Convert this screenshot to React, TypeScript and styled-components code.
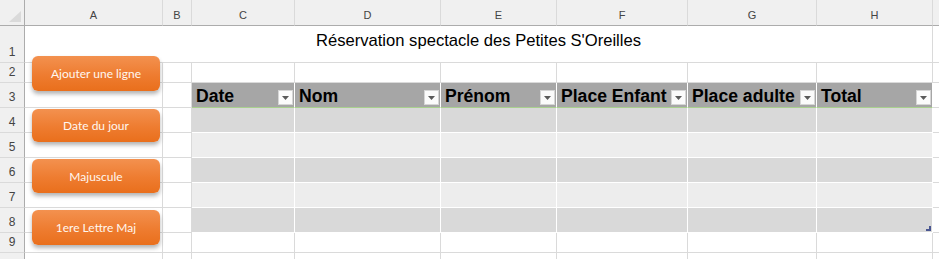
import React from 'react';
import styled, { createGlobalStyle, css } from 'styled-components';

const GlobalStyle = createGlobalStyle`
  html, body {
    margin: 0;
    padding: 0;
    background: #ffffff;
  }
  body {
    width: 939px;
    height: 259px;
    overflow: hidden;
    font-family: 'Liberation Sans', Arial, sans-serif;
  }
`;

const colWidths = [25, 138, 29, 103, 146, 116, 131, 129, 116, 60];
const rowHeights = [26, 37, 20, 25, 25, 25, 25, 25, 25, 20, 30];
const letters = ['A', 'B', 'C', 'D', 'E', 'F', 'G', 'H', ''];
const headers = ['Date', 'Nom', 'Prénom', 'Place Enfant', 'Place adulte', 'Total'];
const buttons = [
  { label: 'Ajouter une ligne', top: 56, height: 35 },
  { label: 'Date du jour', top: 109, height: 33 },
  { label: 'Majuscule', top: 159, height: 34 },
  { label: '1ere Lettre Maj', top: 210, height: 35 },
];

const Sheet = styled.div`
  position: relative;
  display: grid;
  grid-template-columns: ${colWidths.map((w) => `${w}px`).join(' ')};
  grid-template-rows: ${rowHeights.map((h) => `${h}px`).join(' ')};
  width: 939px;
  height: 259px;
  overflow: hidden;
  color: #000;
`;

const cellBase = css`
  box-sizing: border-box;
  min-width: 0;
  overflow: hidden;
`;

const Corner = styled.div`
  ${cellBase};
  background: #f0f0f0;
  border-right: 1px solid #acacac;
  border-bottom: 1px solid #acacac;
  display: flex;
  align-items: flex-end;
  justify-content: flex-end;
  padding: 0 3px 3px 0;
`;

const ColHead = styled.div`
  ${cellBase};
  background: #f0f0f0;
  border-right: 1px solid #dadada;
  border-bottom: 1px solid #acacac;
  display: flex;
  align-items: center;
  justify-content: center;
  padding-top: 4px;
  font-size: 11px;
  color: #444;
`;

const RowHead = styled.div`
  ${cellBase};
  background: #f0f0f0;
  border-right: 1px solid #acacac;
  border-bottom: 1px solid #dadada;
  display: flex;
  align-items: flex-end;
  justify-content: center;
  padding-bottom: 3px;
  font-size: 12px;
  color: #444;
`;

const Cell = styled.div`
  ${cellBase};
  border-right: 1px solid #dadada;
  border-bottom: 1px solid #dadada;
`;

const TitleCell = styled(Cell)`
  grid-column: 2 / span 8;
  display: flex;
  align-items: center;
  justify-content: center;
  padding: 0 0 6px 0;
  font-size: 16.6px;
  white-space: nowrap;
`;

const HeadCell = styled.div`
  ${cellBase};
  position: relative;
  background: #a6a6a6;
  border-right: 1px solid #ffffff;
  border-bottom: 1px solid #a9d08e;
  display: flex;
  align-items: flex-end;
  justify-content: space-between;
  padding: 0 1px 1px 4px;
  font-size: 17.6px;
  font-weight: bold;
  white-space: nowrap;
`;

const HeadLabel = styled.span`
  line-height: 20px;
`;

const FilterButton = styled.span`
  flex: none;
  box-sizing: border-box;
  width: 15px;
  height: 15px;
  margin-bottom: 1px;
  background: #fbfbfb;
  border: 1px solid #d6d6d6;
  display: flex;
  align-items: center;
  justify-content: center;
`;

const DataCell = styled.div<{ $shade: 'dark' | 'light' }>`
  ${cellBase};
  position: relative;
  background: ${(p) => (p.$shade === 'dark' ? '#d9d9d9' : '#ededed')};
  border-right: 1px solid #ffffff;
  border-bottom: 1px solid #ffffff;
`;

const ResizeMark = styled.svg`
  position: absolute;
  right: 1px;
  bottom: 1px;
`;

const ShapeButton = styled.div<{ $top: number; $height: number }>`
  position: absolute;
  left: 32px;
  top: ${(p) => p.$top}px;
  width: 128px;
  height: ${(p) => p.$height}px;
  box-sizing: border-box;
  border-radius: 6px;
  background: linear-gradient(180deg, #f3914f 0%, #ee7c30 55%, #e96f1c 100%);
  box-shadow: 0 3px 4px rgba(0, 0, 0, 0.3);
  display: flex;
  align-items: center;
  justify-content: center;
  font-family: Lato, 'Liberation Sans', sans-serif;
  font-size: 12px;
  color: #fff7f0;
`;

const FilterIcon = () => (
  <svg width="7" height="4" viewBox="0 0 7 4">
    <path d="M0 0h7L3.5 4z" fill="#5a5a5a" />
  </svg>
);

export default function App() {
  const dataRows = [4, 5, 6, 7, 8];

  return (
    <>
      <GlobalStyle />
      <Sheet>
        <Corner>
          <svg width="12" height="11" viewBox="0 0 12 11">
            <path d="M12 0V11H0z" fill="#dadada" />
          </svg>
        </Corner>
        {letters.map((l, i) => (
          <ColHead key={`c${i}`}>{l}</ColHead>
        ))}

        <RowHead>1</RowHead>
        <TitleCell>Réservation spectacle des Petites S'Oreilles</TitleCell>
        <Cell />

        <RowHead>2</RowHead>
        {letters.map((_, i) => (
          <Cell key={`r2-${i}`} />
        ))}

        <RowHead>3</RowHead>
        <Cell />
        <Cell />
        {headers.map((h) => (
          <HeadCell key={h}>
            <HeadLabel>{h}</HeadLabel>
            <FilterButton>
              <FilterIcon />
            </FilterButton>
          </HeadCell>
        ))}
        <Cell />

        {dataRows.map((r) => (
          <React.Fragment key={r}>
            <RowHead>{r}</RowHead>
            <Cell />
            <Cell />
            {headers.map((h, i) => (
              <DataCell key={h} $shade={r % 2 === 0 ? 'dark' : 'light'}>
                {r === 8 && i === headers.length - 1 && (
                  <ResizeMark width="5" height="5" viewBox="0 0 5 5">
                    <path d="M3 0h2v5H0V3h3z" fill="#4a5791" />
                  </ResizeMark>
                )}
              </DataCell>
            ))}
            <Cell />
          </React.Fragment>
        ))}

        <RowHead>9</RowHead>
        {letters.map((_, i) => (
          <Cell key={`r9-${i}`} />
        ))}

        <RowHead />
        {letters.map((_, i) => (
          <Cell key={`r10-${i}`} />
        ))}

        {buttons.map((b) => (
          <ShapeButton key={b.label} $top={b.top} $height={b.height}>
            {b.label}
          </ShapeButton>
        ))}
      </Sheet>
    </>
  );
}
